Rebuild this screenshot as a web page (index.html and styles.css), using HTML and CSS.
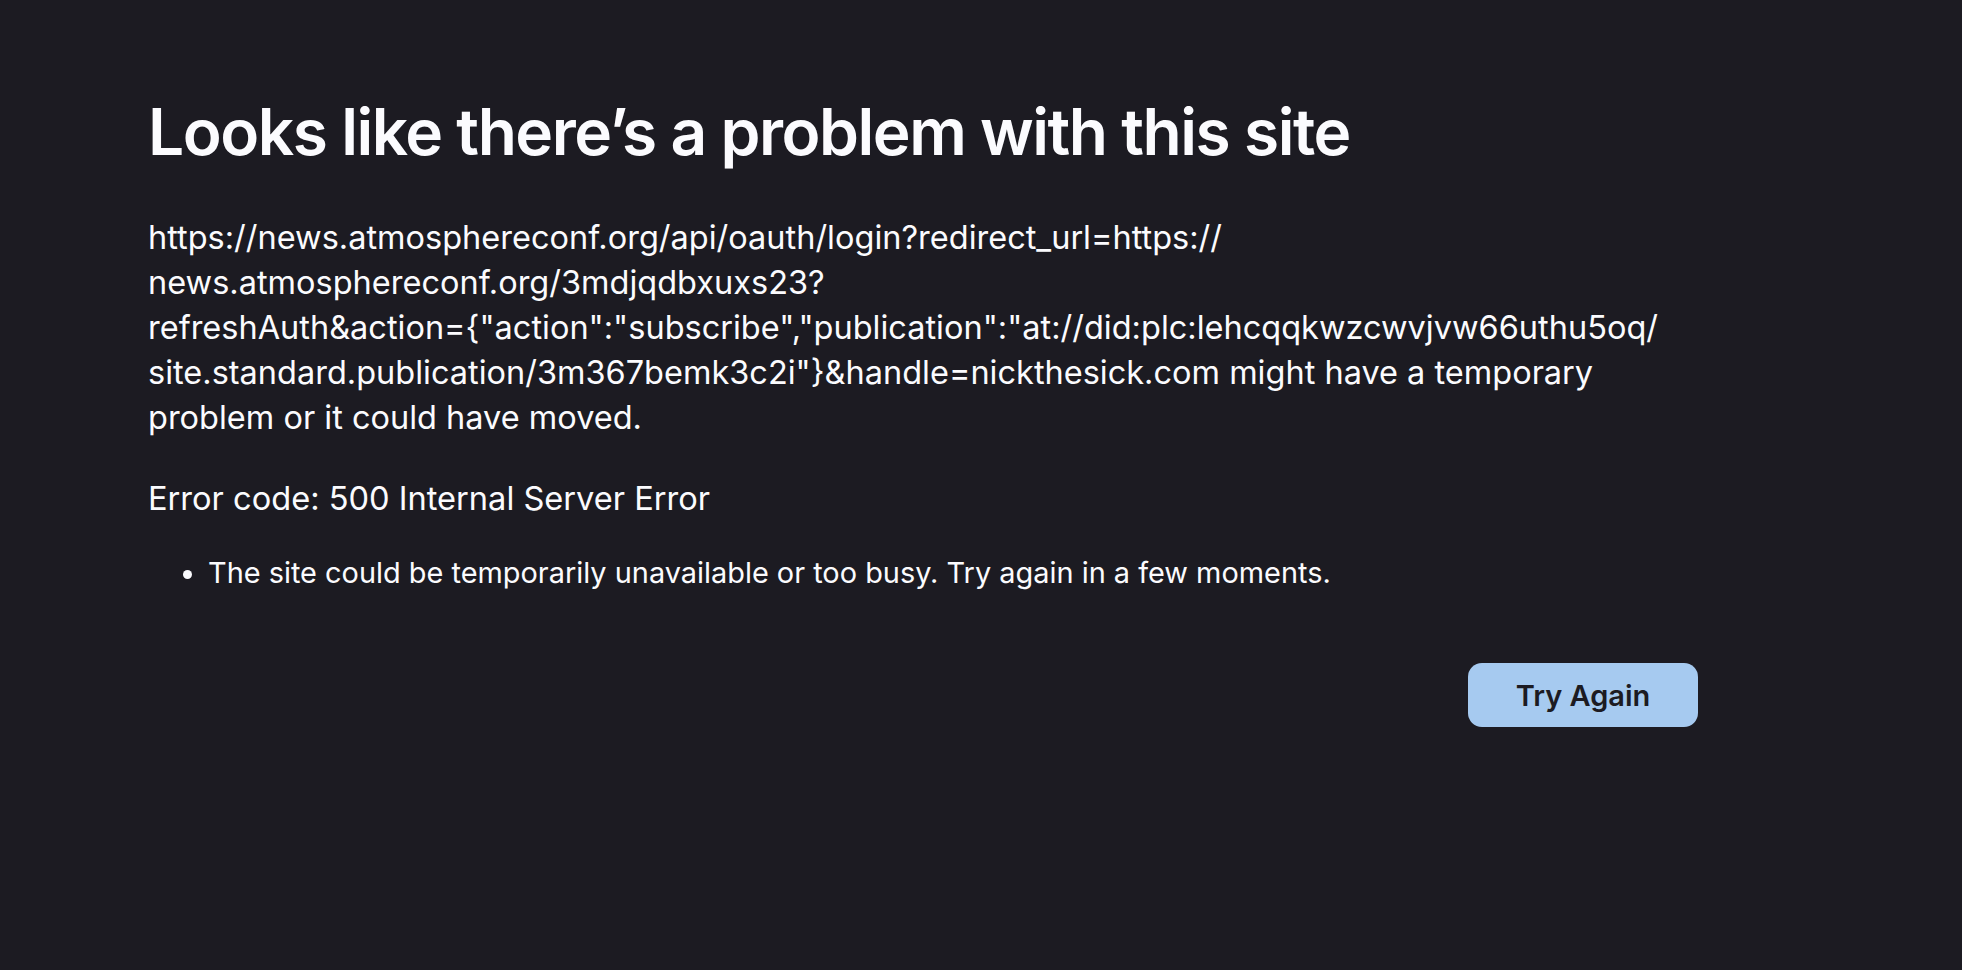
FILE: index.html
```html
<!DOCTYPE html>
<html lang="en">
<head>
<meta charset="utf-8">
<title>Problem loading page</title>
<link rel="stylesheet" href="styles.css">
</head>
<body>
<main class="container">
  <h1 class="title">Looks like there’s a problem with this site</h1>
  <p class="intro">https://news.atmosphereconf.org/api/oauth/login?redirect_url=https://<br>news.atmosphereconf.org/3mdjqdbxuxs23?<br>refreshAuth&amp;action={"action":"subscribe","publication":"at://did:plc:lehcqqkwzcwvjvw66uthu5oq/<br>site.standard.publication/3m367bemk3c2i"}&amp;handle=nickthesick.com might have a temporary<br>problem or it could have moved.</p>
  <p class="code">Error code: 500 Internal Server Error</p>
  <ul class="tips">
    <li>The site could be temporarily unavailable or too busy. Try again in a few moments.</li>
  </ul>
  <div class="actions">
    <button class="primary">Try Again</button>
  </div>
</main>
</body>
</html>
```
FILE: styles.css
```css
html, body {
  margin: 0;
  padding: 0;
  background: #1c1b22;
  color: #fbfbfe;
  font-family: Inter, "Noto Sans", sans-serif;
  height: 100%;
}

.container {
  display: flex;
  flex-direction: column;
  width: 1550px;
  margin-left: 148px;
  padding-top: 92px;
}

.title {
  margin: 0;
  font-size: 64px;
  line-height: 79px;
  font-weight: 600;
  letter-spacing: -1.45px;
}

.intro {
  margin: 44px 0 0;
  font-size: 32.5px;
  line-height: 45px;
}

.code {
  margin: 36px 0 0;
  font-size: 32.6px;
  line-height: 45px;
}

.tips {
  margin: 30px 0 0;
  padding-left: 60px;
  font-size: 28.9px;
  line-height: 1.5;
}

.actions {
  display: flex;
  justify-content: flex-end;
  margin-top: 69px;
}

.primary {
  width: 230px;
  height: 64px;
  border: none;
  border-radius: 14px;
  background: #a6caf0;
  color: #1c1b22;
  font-family: Inter, "Noto Sans", sans-serif;
  font-size: 29px;
  font-weight: 600;
}
```
